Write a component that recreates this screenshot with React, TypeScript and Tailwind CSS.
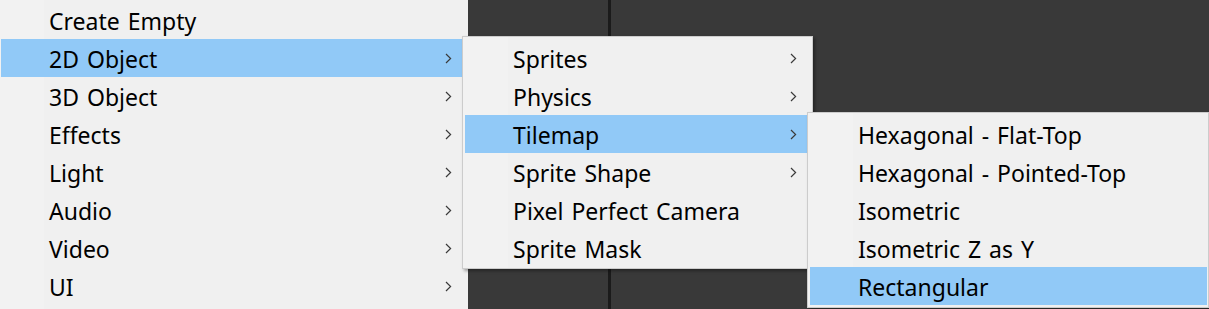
import React from "react";

function Chevron() {
  return (
    <svg width="7" height="11" viewBox="0 0 7 11" className="shrink-0">
      <polyline points="1,1 5.6,5.5 1,10" fill="none" stroke="#3a3a3a" strokeWidth="1.2" />
    </svg>
  );
}

type Item = { label: string; sub?: boolean; active?: boolean };

function Row({ item, chevronMargin }: { item: Item; chevronMargin: string }) {
  return (
    <div
      className={
        "flex h-[38px] items-center pl-[48px] " +
        (item.active ? "bg-[#91c9f7]" : "")
      }
    >
      <span className="flex-1 whitespace-nowrap pt-[1px] text-[23px] leading-[38px] text-black [word-spacing:2px]">
        {item.label}
      </span>
      {item.sub ? <span className={chevronMargin}><Chevron /></span> : null}
    </div>
  );
}

const main: Item[] = [
  { label: "Create Empty" },
  { label: "2D Object", sub: true, active: true },
  { label: "3D Object", sub: true },
  { label: "Effects", sub: true },
  { label: "Light", sub: true },
  { label: "Audio", sub: true },
  { label: "Video", sub: true },
  { label: "UI", sub: true },
];

const sub2: Item[] = [
  { label: "Sprites", sub: true },
  { label: "Physics", sub: true },
  { label: "Tilemap", sub: true, active: true },
  { label: "Sprite Shape", sub: true },
  { label: "Pixel Perfect Camera" },
  { label: "Sprite Mask" },
];

const sub3: Item[] = [
  { label: "Hexagonal - Flat-Top" },
  { label: "Hexagonal - Pointed-Top" },
  { label: "Isometric" },
  { label: "Isometric Z as Y" },
  { label: "Rectangular", active: true },
];

export default function App() {
  return (
    <div className="relative h-[309px] w-[1209px] overflow-hidden bg-[#393939] font-['Noto_Sans',sans-serif]">
      <div className="flex h-full">
        <div className="h-full w-[468px] shrink-0 bg-[linear-gradient(to_right,#f2f2f2_44px,#f0f0f0_44px)] pl-[1px] pr-[3px] pt-[1px]">
          {main.map((it) => (
            <Row key={it.label} item={it} chevronMargin="mr-[13px]" />
          ))}
        </div>
        <div className="w-[140px] shrink-0" />
        <div className="w-[3px] shrink-0 bg-[#1b1b1b]" />
        <div className="flex-1" />
      </div>

      <div className="absolute left-[462px] top-[36px] h-[233px] w-[351px] border border-[#cccccc] bg-[linear-gradient(to_right,#f2f2f2_45px,#f0f0f0_45px)] pb-[1px] pl-[2px] pr-[5px] pt-[2px] shadow-[2px_2px_3px_rgba(0,0,0,0.35)]">
        {sub2.map((it) => (
          <Row key={it.label} item={it} chevronMargin="mr-[10px]" />
        ))}
      </div>

      <div className="absolute left-[807px] top-[112px] h-[196px] w-[402px] border border-[#cccccc] bg-[linear-gradient(to_right,#f2f2f2_45px,#f0f0f0_45px)] pb-[2px] pl-[2px] pr-[1px] pt-[2px] shadow-[2px_2px_3px_rgba(0,0,0,0.35)]">
        {sub3.map((it) => (
          <Row key={it.label} item={it} chevronMargin="mr-[10px]" />
        ))}
      </div>
    </div>
  );
}
